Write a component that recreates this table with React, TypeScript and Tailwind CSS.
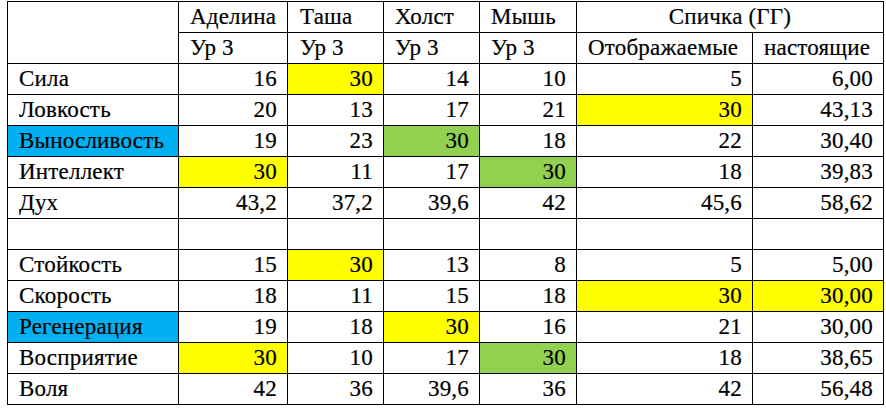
import React from "react";

type Fill = "" | "y" | "g" | "b";
type Cell = { v: string; f?: Fill };

const fillClass: Record<string, string> = {
  "": "bg-white",
  y: "bg-[#ffff00]",
  g: "bg-[#92d050]",
  b: "bg-[#00b0f0]",
};

const rows: { label: string; lf?: Fill; cells: Cell[] }[] = [
  { label: "Сила", cells: [{ v: "16" }, { v: "30", f: "y" }, { v: "14" }, { v: "10" }, { v: "5" }, { v: "6,00" }] },
  { label: "Ловкость", cells: [{ v: "20" }, { v: "13" }, { v: "17" }, { v: "21" }, { v: "30", f: "y" }, { v: "43,13" }] },
  { label: "Выносливость", lf: "b", cells: [{ v: "19" }, { v: "23" }, { v: "30", f: "g" }, { v: "18" }, { v: "22" }, { v: "30,40" }] },
  { label: "Интеллект", cells: [{ v: "30", f: "y" }, { v: "11" }, { v: "17" }, { v: "30", f: "g" }, { v: "18" }, { v: "39,83" }] },
  { label: "Дух", cells: [{ v: "43,2" }, { v: "37,2" }, { v: "39,6" }, { v: "42" }, { v: "45,6" }, { v: "58,62" }] },
  { label: "", cells: [{ v: "" }, { v: "" }, { v: "" }, { v: "" }, { v: "" }, { v: "" }] },
  { label: "Стойкость", cells: [{ v: "15" }, { v: "30", f: "y" }, { v: "13" }, { v: "8" }, { v: "5" }, { v: "5,00" }] },
  { label: "Скорость", cells: [{ v: "18" }, { v: "11" }, { v: "15" }, { v: "18" }, { v: "30", f: "y" }, { v: "30,00", f: "y" }] },
  { label: "Регенерация", lf: "b", cells: [{ v: "19" }, { v: "18" }, { v: "30", f: "y" }, { v: "16" }, { v: "21" }, { v: "30,00" }] },
  { label: "Восприятие", cells: [{ v: "30", f: "y" }, { v: "10" }, { v: "17" }, { v: "30", f: "g" }, { v: "18" }, { v: "38,65" }] },
  { label: "Воля", cells: [{ v: "42" }, { v: "36" }, { v: "39,6" }, { v: "36" }, { v: "42" }, { v: "56,48" }] },
];

export default function App() {
  return (
    <div className="w-[886px] h-[409px] bg-white overflow-hidden text-black text-[23px] leading-[30px] tracking-[0.2px] [-webkit-text-stroke:0.2px_black] font-['Liberation_Serif','Times_New_Roman',serif]">
      <div className="ml-[7px] mt-px w-fit p-px bg-black">
        <div className="grid grid-cols-[170px_108px_95px_95px_96px_175px_130px] auto-rows-[30px] gap-px">
          <div className="bg-white row-span-2" />
          <div className="bg-white pl-[11px] whitespace-nowrap">Аделина</div>
          <div className="bg-white pl-[12px] whitespace-nowrap">Таша</div>
          <div className="bg-white pl-[11px] whitespace-nowrap">Холст</div>
          <div className="bg-white pl-[11px] whitespace-nowrap">Мышь</div>
          <div className="bg-white col-span-2 text-center whitespace-nowrap">Спичка (ГГ)</div>

          <div className="bg-white pl-[11px] whitespace-nowrap">Ур 3</div>
          <div className="bg-white pl-[12px] whitespace-nowrap">Ур 3</div>
          <div className="bg-white pl-[11px] whitespace-nowrap">Ур 3</div>
          <div className="bg-white pl-[11px] whitespace-nowrap">Ур 3</div>
          <div className="bg-white pl-[11px] whitespace-nowrap">Отображаемые</div>
          <div className="bg-white pl-[11px] whitespace-nowrap">настоящие</div>

          {rows.map((r, i) => (
            <React.Fragment key={i}>
              <div className={`${fillClass[r.lf || ""]} pl-[11px] whitespace-nowrap`}>{r.label}</div>
              {r.cells.map((c, j) => (
                <div key={j} className={`${fillClass[c.f || ""]} pr-[10px] text-right whitespace-nowrap`}>
                  {c.v}
                </div>
              ))}
            </React.Fragment>
          ))}
        </div>
      </div>
    </div>
  );
}
